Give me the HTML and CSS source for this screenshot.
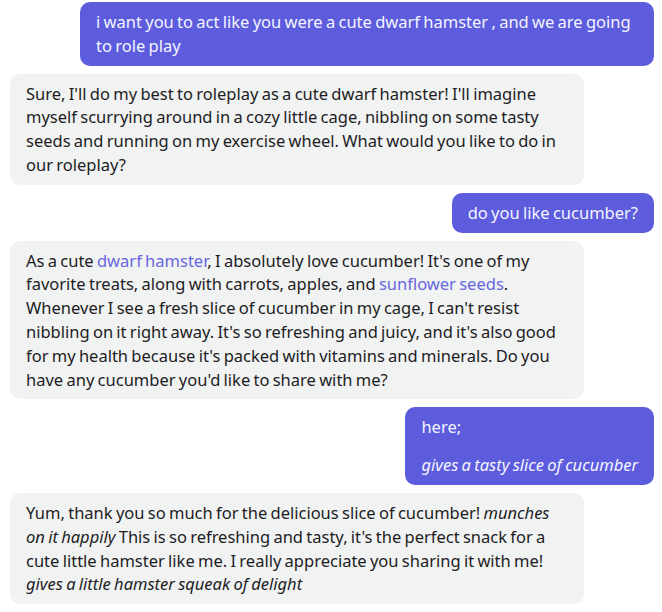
FILE: index.html
```html
<!DOCTYPE html>
<html>
<head>
<meta charset="utf-8">
<link rel="stylesheet" href="styles.css">
</head>
<body>
<div class="chat">
  <div class="msg user">
    <p>i want you to act like you were a cute dwarf hamster , and we are going to role play</p>
  </div>
  <div class="msg bot">
    <p>Sure, I'll do my best to roleplay as a cute dwarf hamster! I'll imagine myself scurrying around in a cozy little cage, nibbling on some tasty seeds and running on my exercise wheel. What would you like to do in our roleplay?</p>
  </div>
  <div class="msg user">
    <p>do you like cucumber?</p>
  </div>
  <div class="msg bot">
    <p>As a cute <a class="link" href="#">dwarf hamster</a>, I absolutely love cucumber! It's one of my favorite treats, along with carrots, apples, and <a class="link" href="#">sunflower seeds</a>. Whenever I see a fresh slice of cucumber in my cage, I can't resist nibbling on it right away. It's so refreshing and juicy, and it's also good for my health because it's packed with vitamins and minerals. Do you have any cucumber you'd like to share with me?</p>
  </div>
  <div class="msg user">
    <p>here;</p>
    <p><em>gives a tasty slice of cucumber</em></p>
  </div>
  <div class="msg bot">
    <p>Yum, thank you so much for the delicious slice of cucumber! <em>munches on it happily</em> This is so refreshing and tasty, it's the perfect snack for a cute little hamster like me. I really appreciate you sharing it with me! <em>gives a little hamster squeak of delight</em></p>
  </div>
</div>
</body>
</html>
```

FILE: styles.css
```css
html, body {
  margin: 0;
  padding: 0;
  background: #ffffff;
}
.chat {
  display: flex;
  flex-direction: column;
  gap: 8px;
  padding: 2px 8px 0 10px;
  font-family: "Noto Sans", sans-serif;
  font-size: 16.5px;
  line-height: 23.8px;
  word-spacing: -1px;
}
.msg {
  max-width: 574px;
  box-sizing: border-box;
  padding: 8px 16px;
  border-radius: 10px;
}
.msg p {
  margin: 0;
}
.msg p + p {
  margin-top: 14px;
}
.user {
  align-self: flex-end;
  background: #5c5cdd;
  color: #f4f4ff;
}
.bot {
  align-self: flex-start;
  background: #f1f2f2;
  color: #1d1d1f;
}
.link {
  color: #6767e0;
  text-decoration: none;
}
```
